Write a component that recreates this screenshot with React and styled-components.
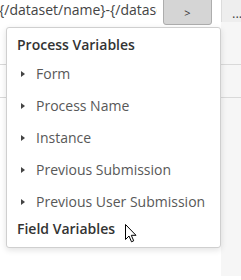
import React from "react";
import styled, { createGlobalStyle } from "styled-components";

const Global = createGlobalStyle`
  html, body { margin: 0; padding: 0; background: #fff; }
  body { font-family: "Open Sans", "Liberation Sans", sans-serif; overflow: hidden; }
`;

const Page = styled.div`
  position: relative;
  width: 241px;
  height: 280px;
  overflow: hidden;
  background: #fff;
`;

const TopBar = styled.div`
  display: flex;
  align-items: flex-start;
  height: 26px;
  margin-top: -4px;
  & > * { flex-shrink: 0; }
`;

const Input = styled.div`
  width: 157px;
  height: 30px;
  overflow: hidden;
  white-space: nowrap;
  font-size: 14px;
  line-height: 1;
  color: #444;
  padding-top: 7px;
  box-sizing: border-box;
  text-indent: -1px;
`;

const ArrowButton = styled.div`
  margin-left: 6px;
  width: 49px;
  height: 29px;
  box-sizing: border-box;
  background: #d5d5d5;
  border: 1px solid #adadad;
  border-radius: 0 0 3px 3px;
  display: flex;
  align-items: center;
  justify-content: center;
  padding-top: 3px;
  font-size: 11px;
  color: #333;
`;

const DotsButton = styled.div`
  margin-left: 9px;
  width: 40px;
  height: 29px;
  box-sizing: border-box;
  background: #eeeeee;
  border: 1px solid #dcdcdc;
  border-radius: 0 0 3px 3px;
  display: flex;
  align-items: center;
  padding-left: 10px;
  padding-top: 5px;
  font-size: 13px;
  color: #444;
`;

const Body = styled.div`
  display: grid;
  grid-template-columns: 1fr 20px;
  height: 254px;
`;

const Main = styled.div`
  display: flex;
  flex-direction: column;
`;

const Side = styled.div`
  background: #f6f6f6;
  display: flex;
  flex-direction: column;
`;

const Row = styled.div`
  height: ${(p) => p.h}px;
  border-bottom: 1px solid #d9d9d9;
  flex-shrink: 0;
`;

const Popup = styled.div`
  position: absolute;
  left: 6px;
  top: 27px;
  width: 215px;
  height: 221px;
  box-sizing: border-box;
  background: #fff;
  border: 1px solid #cfcfcf;
  border-radius: 3px;
  box-shadow: 0 2px 6px rgba(0, 0, 0, 0.12);
  padding-top: 7px;
  display: flex;
  flex-direction: column;
`;

const Header = styled.div`
  height: 20px;
  margin-top: ${(p) => p.$top || 0}px;
  margin-bottom: ${(p) => p.$bottom || 0}px;
  padding-left: 10px;
  font-size: 14px;
  font-weight: 600;
  color: #333;
  line-height: 20px;
`;

const Item = styled.div`
  height: 32px;
  display: flex;
  align-items: center;
  padding-left: 14px;
  font-size: 14px;
  color: #585858;
  gap: 11px;
`;

const Caret = styled.span`
  width: 0;
  height: 0;
  border-top: 3px solid transparent;
  border-bottom: 3px solid transparent;
  border-left: 4px solid #444;
  margin-top: 1px;
`;

const Cursor = styled.svg`
  position: absolute;
  left: 125px;
  top: 224px;
`;

const items = ["Form", "Process Name", "Instance", "Previous Submission", "Previous User Submission"];

export default function App() {
  return (
    <Page>
      <Global />
      <TopBar>
        <Input>{"{/dataset/name}-{/dataset/date}"}</Input>
        <ArrowButton>&gt;</ArrowButton>
        <DotsButton>...</DotsButton>
      </TopBar>
      <Body>
        <Main>
          <Row h={42} />
          <Row h={32} />
        </Main>
        <Side>
          <Row h={42} />
          <Row h={32} />
        </Side>
      </Body>
      <Popup>
        <Header $bottom={2}>Process Variables</Header>
        {items.map((t) => (
          <Item key={t}>
            <Caret />
            {t}
          </Item>
        ))}
        <Header $top={2}>Field Variables</Header>
      </Popup>
      <Cursor width="12" height="19" viewBox="0 0 12 19">
        <path d="M0.5 0.5 L0.5 15.5 L4 12 L6.5 17.8 L8.7 16.8 L6.3 11.3 L11 11.3 Z" fill="#fff" stroke="#000" strokeWidth="1" strokeLinejoin="miter" />
      </Cursor>
    </Page>
  );
}
